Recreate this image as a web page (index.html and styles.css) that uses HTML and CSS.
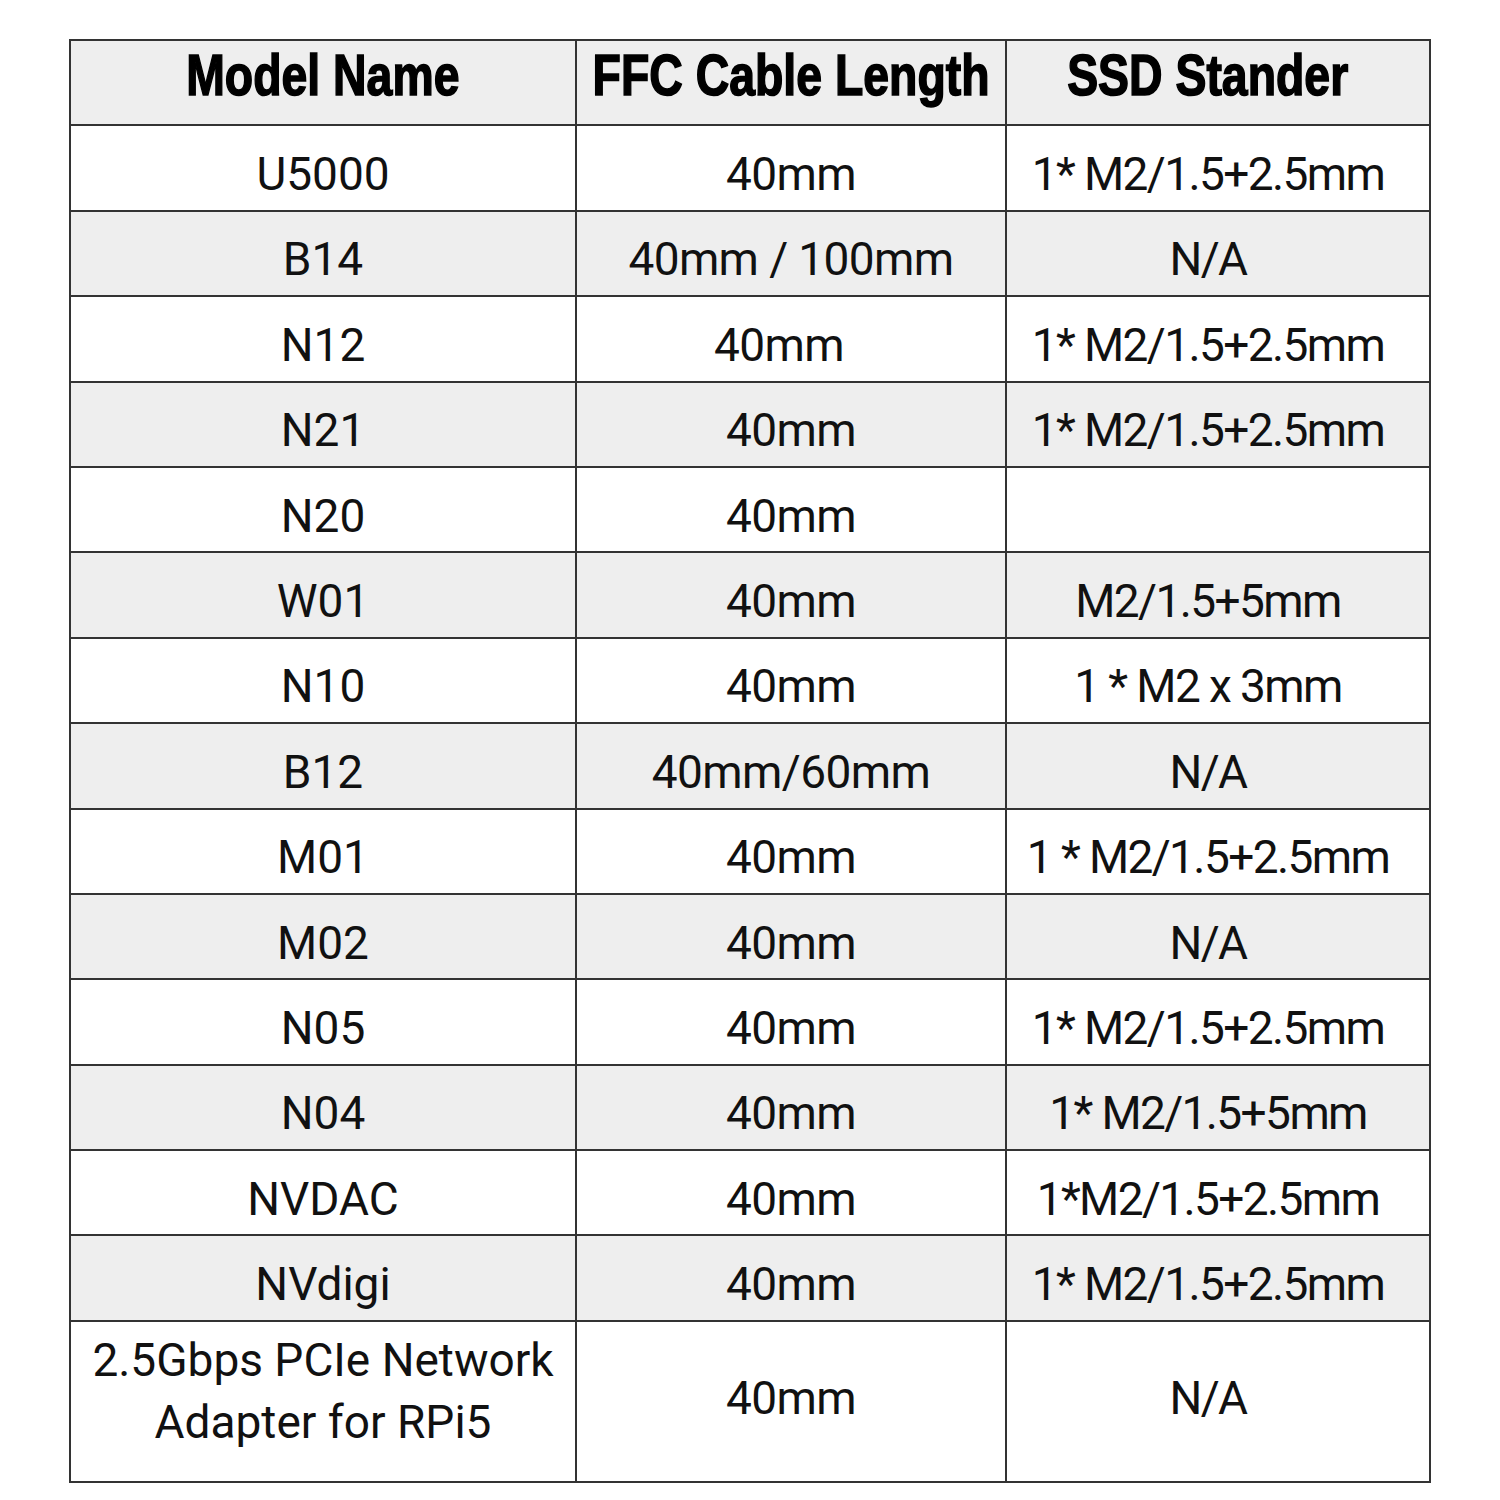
FILE: index.html
```html
<!DOCTYPE html>
<html lang="en">
<head>
<meta charset="utf-8">
<title>Model table</title>
<link rel="stylesheet" href="styles.css">
</head>
<body>
<div class="table" role="table">
  <div class="cell head"><span class="narrow">Model Name</span></div>
  <div class="cell head"><span class="narrow">FFC Cable Length</span></div>
  <div class="cell head c3"><span class="narrow">SSD Stander</span></div>

  <div class="cell">U5000</div><div class="cell c2">40mm</div><div class="cell c3">1* M2/1.5+2.5mm</div>
  <div class="cell alt">B14</div><div class="cell alt c2">40mm / 100mm</div><div class="cell alt c3">N/A</div>
  <div class="cell">N12</div><div class="cell c2 shift">40mm</div><div class="cell c3">1* M2/1.5+2.5mm</div>
  <div class="cell alt">N21</div><div class="cell alt c2">40mm</div><div class="cell alt c3">1* M2/1.5+2.5mm</div>
  <div class="cell">N20</div><div class="cell c2">40mm</div><div class="cell c3"></div>
  <div class="cell alt">W01</div><div class="cell alt c2">40mm</div><div class="cell alt c3">M2/1.5+5mm</div>
  <div class="cell">N10</div><div class="cell c2">40mm</div><div class="cell c3">1 * M2 x 3mm</div>
  <div class="cell alt">B12</div><div class="cell alt c2">40mm/60mm</div><div class="cell alt c3">N/A</div>
  <div class="cell">M01</div><div class="cell c2">40mm</div><div class="cell c3">1 * M2/1.5+2.5mm</div>
  <div class="cell alt">M02</div><div class="cell alt c2">40mm</div><div class="cell alt c3">N/A</div>
  <div class="cell">N05</div><div class="cell c2">40mm</div><div class="cell c3">1* M2/1.5+2.5mm</div>
  <div class="cell alt">N04</div><div class="cell alt c2">40mm</div><div class="cell alt c3">1* M2/1.5+5mm</div>
  <div class="cell">NVDAC</div><div class="cell c2">40mm</div><div class="cell c3">1*M2/1.5+2.5mm</div>
  <div class="cell alt">NVdigi</div><div class="cell alt c2">40mm</div><div class="cell alt c3">1* M2/1.5+2.5mm</div>
  <div class="cell tall">2.5Gbps PCIe Network<br>Adapter for RPi5</div><div class="cell c2 last">40mm</div><div class="cell c3 last">N/A</div>
</div>
</body>
</html>
```
FILE: styles.css
```css
html, body {
  margin: 0;
  padding: 0;
  background: #ffffff;
}
body {
  padding: 39px 0 0 69px;
}
.table {
  display: grid;
  width: 1362px;
  box-sizing: border-box;
  grid-template-columns: 504px 428px 422px;
  grid-template-rows: repeat(15, 83.4px) 159px;
  gap: 2px;
  padding: 2px;
  background: #333333;
}
.cell {
  box-sizing: border-box;
  background: #ffffff;
  display: flex;
  align-items: center;
  justify-content: center;
  text-align: center;
  font-family: Roboto, "Liberation Sans", sans-serif;
  font-size: 46px;
  color: #111111;
  line-height: 62px;
  padding-top: 12px;
  white-space: nowrap;
}
.cell.alt,
.cell.head {
  background: #eeeeee;
}
.cell.c2 {
  letter-spacing: -0.6px;
}
.cell.c3 {
  letter-spacing: -1.6px;
  padding-right: 20px;
}
.cell.head {
  font-family: "Liberation Sans", Arial, sans-serif;
  font-weight: 700;
  font-size: 58px;
  letter-spacing: 0;
  color: #000000;
  padding-top: 0;
  padding-bottom: 16px;
}
.narrow {
  display: inline-block;
  transform: scaleX(0.8);
  -webkit-text-stroke: 1.6px #000000;
}
.cell.shift {
  padding-right: 24px;
}
.cell.tall {
  padding-top: 0;
  padding-bottom: 20px;
}
.cell.last {
  padding-top: 0;
  padding-bottom: 6px;
}
```
